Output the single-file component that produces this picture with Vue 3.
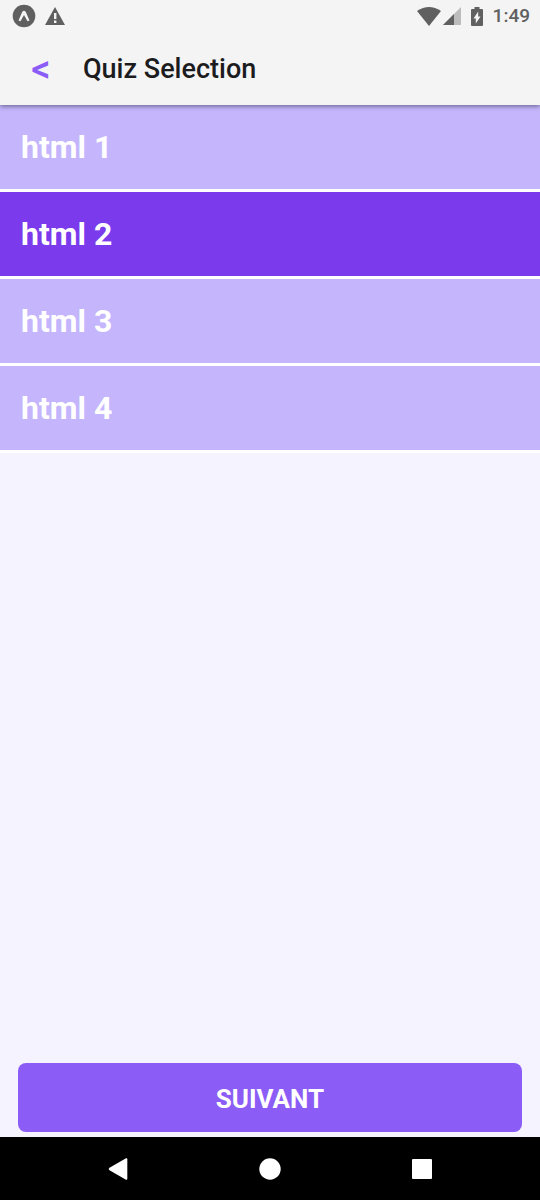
<script setup>
import { ref } from 'vue'

const quizzes = ['html 1', 'html 2', 'html 3', 'html 4']
const selected = ref(1)
</script>

<template>
  <div class="screen">
    <div class="status">
      <div class="group">
        <svg class="app-icon" viewBox="0 0 24 24" aria-hidden="true">
          <circle cx="12" cy="12" r="11.3" fill="#606060" />
          <path d="M6.500 16.400 10.200 8Q12 5.600 13.800 8L17.500 16.400 15.500 17.300 12 11 8.500 17.300Z" fill="#f4f4f4" />
        </svg>
        <svg class="warning" viewBox="0 0 20 18" aria-hidden="true">
          <path d="M10 0 20 18H0Z" fill="#606060" />
          <path d="M9 6h2.400v6H9zM9 13.500h2.400v2.500H9z" fill="#f4f4f4" />
        </svg>
      </div>
      <div class="group right">
        <svg class="wifi" viewBox="0 0 24 19" aria-hidden="true">
          <path d="M0 4Q12-3.800 24 4L12 19Z" fill="#606060" />
        </svg>
        <svg class="signal" viewBox="0 0 18 18" aria-hidden="true">
          <path d="M18 0V18H0Z" fill="#bcbcbc" />
          <path d="M11 7V18H0Z" fill="#606060" />
        </svg>
        <svg class="battery" viewBox="0 0 12 19" aria-hidden="true">
          <path d="M3.500 0h5v2H11a1 1 0 0 1 1 1v15a1 1 0 0 1-1 1H1a1 1 0 0 1-1-1V3a1 1 0 0 1 1-1h2.500Z" fill="#606060" />
          <path d="M7.200 4.500V9.500H9.500L4.800 16.500V11.500H2.500Z" fill="#f4f4f4" />
        </svg>
        <span class="time">1:49</span>
      </div>
    </div>

    <header class="header">
      <button class="back" type="button" aria-label="Back">&lt;</button>
      <h1>Quiz Selection</h1>
    </header>

    <main class="content">
      <ul class="list">
        <li v-for="(quiz, i) in quizzes" :key="quiz">
          <button
            type="button"
            class="row"
            :class="{ active: i === selected }"
            :aria-pressed="i === selected"
            @click="selected = i"
          >{{ quiz }}</button>
        </li>
      </ul>
      <button class="next" type="button">SUIVANT</button>
    </main>

    <nav class="nav">
      <button type="button" aria-label="Back">
        <svg viewBox="0 0 24 24"><path d="M20 1.300Q21.300.800 21.300 2.300V21.700Q21.300 23.200 20 22.700L3.500 13.200Q1.800 12 3.500 10.800Z" fill="#fff" /></svg>
      </button>
      <button type="button" aria-label="Home">
        <svg viewBox="0 0 24 24"><circle cx="12" cy="12" r="10.700" fill="#fff" /></svg>
      </button>
      <button type="button" aria-label="Recent apps">
        <svg viewBox="0 0 24 24"><rect x="2" y="2" width="20" height="20" rx="1" fill="#fff" /></svg>
      </button>
    </nav>
  </div>
</template>

<style>
body {
  margin: 0;
}
</style>

<style scoped>
.screen {
  display: flex;
  flex-direction: column;
  min-height: 100vh;
  background: #f5f3ff;
  font-family: Roboto, "Liberation Sans", sans-serif;
}

button {
  margin: 0;
  padding: 0;
  border: 0;
  background: none;
  font-family: inherit;
  cursor: pointer;
}

svg {
  display: block;
}

.status {
  position: relative;
  z-index: 2;
  display: flex;
  justify-content: space-between;
  align-items: center;
  height: 32px;
  padding: 0 10px 0 12px;
  background: #f4f4f4;
}

.group {
  display: flex;
  align-items: center;
  gap: 9px;
}

.right {
  gap: 2px;
}

.app-icon {
  width: 24px;
  height: 24px;
}

.warning {
  width: 20px;
  height: 18px;
}

.wifi {
  width: 24px;
  height: 19px;
}

.signal {
  width: 18px;
  height: 18px;
}

.battery {
  width: 12px;
  height: 19px;
  margin: 0 8px;
}

.time {
  color: #606060;
  font-size: 19px;
  font-weight: 500;
  line-height: 32px;
}

.header {
  position: relative;
  z-index: 1;
  display: flex;
  align-items: center;
  height: 73px;
  padding-left: 31px;
  gap: 32px;
  background: #f4f4f4;
  box-shadow: 0 1px 5px rgba(0, 0, 0, 0.5);
}

.back {
  width: 20px;
  color: #8b5cf6;
  font-size: 38px;
  font-weight: 500;
  line-height: 48px;
}

h1 {
  margin: 0;
  color: #1c1c1e;
  font-size: 27px;
  font-weight: 500;
  line-height: 36px;
}

.content {
  display: flex;
  flex: 1;
  flex-direction: column;
  justify-content: space-between;
}

.list {
  margin: 0;
  padding: 0;
  list-style: none;
}

.row {
  display: block;
  box-sizing: content-box;
  width: 100%;
  height: 84px;
  border-bottom: 3px solid #fff;
  background: #c4b5fd;
  color: #fff;
  font-size: 32px;
  font-weight: 700;
  text-align: left;
  text-indent: 21px;
}

.row.active {
  background: #7c3aed;
}

.next {
  height: 69px;
  margin: 0 18px 5px;
  padding-top: 2px;
  border-radius: 8px;
  background: #8b5cf6;
  color: #fff;
  font-size: 26px;
  font-weight: 700;
}

.nav {
  display: flex;
  justify-content: center;
  align-items: center;
  gap: 128px;
  height: 63px;
  background: #000;
}

.nav svg {
  width: 24px;
  height: 24px;
}
</style>
